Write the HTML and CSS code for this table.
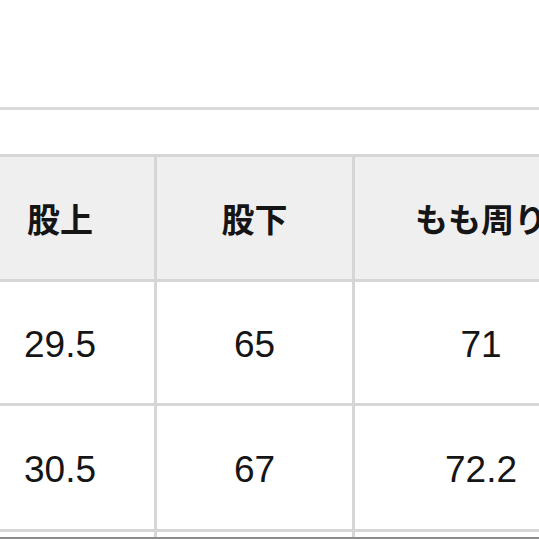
FILE: index.html
```html
<!DOCTYPE html>
<html lang="ja">
<head>
<meta charset="utf-8">
<link rel="stylesheet" href="styles.css">
</head>
<body>
<div class="page">
  <div class="top-rule"></div>
  <div class="size-table">
    <div class="cell head">股上</div>
    <div class="cell head">股下</div>
    <div class="cell head">もも周り</div>
    <div class="cell num r1">29.5</div>
    <div class="cell num r1">65</div>
    <div class="cell num r1">71</div>
    <div class="cell num r2">30.5</div>
    <div class="cell num r2">67</div>
    <div class="cell num r2">72.2</div>
    <div class="cell r3"></div>
    <div class="cell r3"></div>
    <div class="cell r3"></div>
  </div>
  <div class="bottom-rule"></div>
</div>
</body>
</html>
```

FILE: styles.css
```css
html, body {
  margin: 0;
  padding: 0;
  background: #ffffff;
}
.page {
  width: 539px;
  height: 539px;
  overflow: hidden;
  position: relative;
}
.top-rule {
  margin-top: 107px;
  height: 3px;
  background: #dadada;
}
.size-table {
  margin-top: 44px;
  margin-left: -37px;
  width: 700px;
  display: grid;
  grid-template-columns: 188px 195px 252px;
  grid-template-rows: 122px 121px 123px 5px;
  gap: 3px;
  padding: 3px 0 0 3px;
  background: #d6d6d6;
}
.cell {
  background: #ffffff;
  display: flex;
  align-items: center;
  justify-content: center;
  color: #151515;
}
.head {
  background: #efefef;
  font-family: "Noto Sans CJK JP", "Noto Sans", sans-serif;
  font-weight: 700;
  font-size: 33px;
}
.num {
  font-family: "Liberation Sans", Arial, sans-serif;
  font-size: 37px;
  padding-top: 5px;
}
.bottom-rule {
  height: 2px;
  background: #8c8c8c;
}
```
